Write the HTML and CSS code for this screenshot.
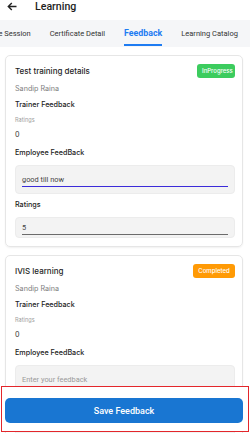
FILE: index.html
```html
<!DOCTYPE html>
<html>
<head>
<meta charset="utf-8">
<link rel="stylesheet" href="styles.css">
</head>
<body>
<div class="header">
  <svg class="back" width="10" height="9" viewBox="0 0 10 9"><path d="M9.5 4.5H1.5M4.8 1L1.3 4.5L4.8 8" fill="none" stroke="#222" stroke-width="1.4"/></svg>
  <span class="title">Learning</span>
</div>
<div class="tabs">
  <div class="tab first">Live Session</div>
  <div class="tab">Certificate Detail</div>
  <div class="tab active">Feedback</div>
  <div class="tab">Learning Catalog</div>
</div>
<div class="list">
  <div class="card">
    <div class="row">
      <div class="ctitle">Test training details</div>
      <div class="badge green">InProgress</div>
    </div>
    <div class="name">Sandip Raina</div>
    <div class="label">Trainer Feedback</div>
    <div class="small">Ratings</div>
    <div class="value">0</div>
    <div class="label emp">Employee FeedBack</div>
    <div class="field big"><div class="ftext active-line">good till now</div></div>
    <div class="label rlabel">Ratings</div>
    <div class="field small-f"><div class="ftext gray-line">5</div></div>
  </div>
  <div class="card">
    <div class="row">
      <div class="ctitle">IVIS learning</div>
      <div class="badge orange">Completed</div>
    </div>
    <div class="name">Sandip Raina</div>
    <div class="label">Trainer Feedback</div>
    <div class="small">Ratings</div>
    <div class="value">0</div>
    <div class="label emp">Employee FeedBack</div>
    <div class="field big"><div class="ftext placeholder">Enter your feedback</div></div>
    <div class="label rlabel">Ratings</div>
    <div class="field small-f"><div class="ftext gray-line">&nbsp;</div></div>
  </div>
</div>
<div class="footer">
  <button class="save">Save Feedback</button>
</div>
</body>
</html>
```

FILE: styles.css
```css
html, body {
  margin: 0;
  padding: 0;
  background: #ffffff;
  overflow: hidden;
  height: 433px;
}
body {
  font-family: Inter, "Noto Sans", sans-serif;
  color: #222;
}
.header {
  height: 20px;
  display: flex;
  align-items: flex-start;
  background: #fff;
}
.back {
  margin: 2px 0 0 7px;
}
.title {
  font-family: Roboto, sans-serif;
  font-weight: 500;
  font-size: 10.6px;
  line-height: 14px;
  margin-left: 18px;
  color: #1d1d1d;
}
.tabs {
  height: 27px;
  background: #f5f6f8;
  display: flex;
  gap: 19px;
  margin-left: -11px;
  white-space: nowrap;
  overflow: hidden;
  font-family: Roboto, sans-serif;
}
.tab {
  display: flex;
  align-items: center;
  font-size: 7.5px;
  color: #333;
  border-top: 2px solid transparent;
  border-bottom: 2px solid transparent;
  margin-bottom: 1px;
}
.tab.active {
  font-size: 8.8px;
  font-weight: 700;
  color: #1e7cf2;
  border-bottom-color: #1e7cf2;
}
.list {
  padding: 8px 7px 0 5px;
  display: flex;
  flex-direction: column;
  gap: 8px;
}
.card {
  border: 1px solid #e6e6e6;
  border-radius: 5px;
  padding: 8px 7px 8px 9px;
  box-shadow: 0 1px 2px rgba(0,0,0,0.06);
}
.row {
  display: flex;
  justify-content: space-between;
  align-items: center;
  height: 14px;
}
.ctitle {
  font-size: 8px;
  font-weight: 500;
  color: #1f1f1f;
}
.badge {
  height: 14px;
  line-height: 14px;
  padding: 0 5px;
  border-radius: 3px;
  color: #fff;
  font-size: 6px;
  font-weight: 500;
}
.badge.green { background: #3ccc5e; width: 28px; text-align: center; }
.badge.orange { background: #ff9a05; width: 32px; text-align: center; }
.name {
  margin-top: 4px;
  line-height: 14px;
  font-size: 7.2px;
  color: #7d7d7d;
}
.label {
  margin-top: 2px;
  line-height: 14px;
  font-size: 7.2px;
  font-weight: 500;
  color: #222;
}
.small {
  margin-top: 2px;
  line-height: 12px;
  font-size: 5.6px;
  color: #a0a0a0;
}
.value {
  margin-top: 2px;
  line-height: 14px;
  font-size: 7.2px;
  color: #333;
}
.label.emp { margin-top: 4px; }
.label.rlabel { margin-top: 4px; }
.field {
  margin-top: 5px;
  background: #f3f3f3;
  border: 1px solid #ececec;
  border-radius: 4px;
  padding: 0 6px;
}
.field.big { padding-top: 8px; padding-bottom: 6px; }
.field.small-f { padding-top: 4px; padding-bottom: 2px; }
.ftext {
  line-height: 12px;
  font-family: Roboto, sans-serif;
  font-size: 7.4px;
  color: #444;
  border-bottom: 1px solid #6b6b6b;
}
.ftext.active-line { border-bottom-color: #3b2bd9; }
.ftext.placeholder { color: #9a9a9a; border-bottom-color: #6b6b6b; }
.footer {
  position: fixed;
  left: 1px;
  right: 1px;
  bottom: 1px;
  border: 1px solid #e3262b;
  background: #fff;
  padding: 11px 5px 0 3px;
  box-sizing: border-box;
  height: 46px;
}
.save {
  display: block;
  width: 100%;
  height: 25px;
  border: none;
  border-radius: 5px;
  background: #1976d2;
  color: #fff;
  font-family: Roboto, sans-serif;
  font-weight: 500;
  font-size: 9px;
  padding: 0;
}
```
